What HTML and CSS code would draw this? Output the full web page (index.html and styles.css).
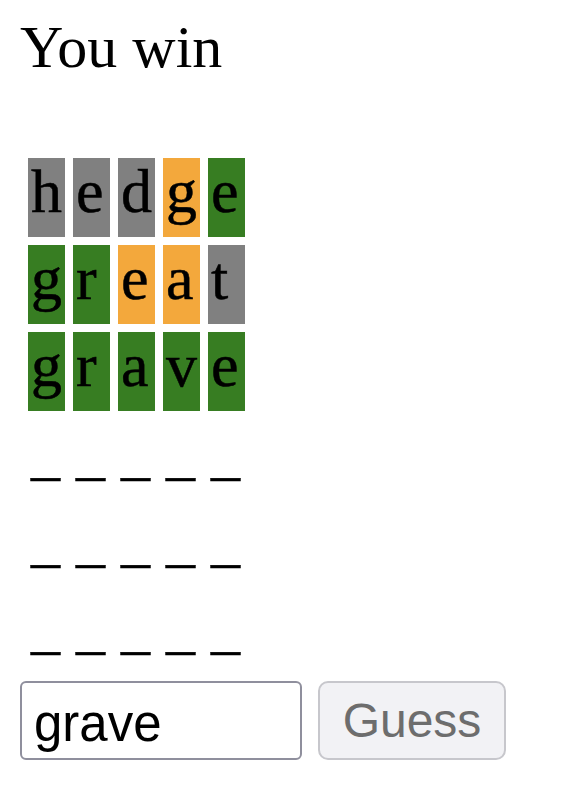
FILE: index.html
```html
<!DOCTYPE html>
<html lang="en">
<head>
<meta charset="utf-8">
<title>You win</title>
<link rel="stylesheet" href="styles.css">
</head>
<body>
<div class="page">
  <h1 class="status">You win</h1>
  <div class="board">
    <div class="row">
      <span class="tile absent">h</span><span class="tile absent">e</span><span class="tile absent">d</span><span class="tile present">g</span><span class="tile correct">e</span>
    </div>
    <div class="row">
      <span class="tile correct">g</span><span class="tile correct">r</span><span class="tile present">e</span><span class="tile present">a</span><span class="tile absent">t</span>
    </div>
    <div class="row">
      <span class="tile correct">g</span><span class="tile correct">r</span><span class="tile correct">a</span><span class="tile correct">v</span><span class="tile correct">e</span>
    </div>
    <div class="row">
      <span class="tile empty">_</span><span class="tile empty">_</span><span class="tile empty">_</span><span class="tile empty">_</span><span class="tile empty">_</span>
    </div>
    <div class="row">
      <span class="tile empty">_</span><span class="tile empty">_</span><span class="tile empty">_</span><span class="tile empty">_</span><span class="tile empty">_</span>
    </div>
    <div class="row">
      <span class="tile empty">_</span><span class="tile empty">_</span><span class="tile empty">_</span><span class="tile empty">_</span><span class="tile empty">_</span>
    </div>
  </div>
  <form class="guess-form">
    <input class="guess-input" type="text" value="grave">
    <button class="guess-button" type="button">Guess</button>
  </form>
</div>
</body>
</html>
```
FILE: styles.css
```css
html, body {
  margin: 0;
  padding: 0;
  background: #ffffff;
}

.page {
  padding: 0 20px;
  font-family: "Liberation Serif", "Times New Roman", serif;
  color: #000;
}

.status {
  margin: 14px 0 0;
  font-size: 60px;
  line-height: 66px;
  font-weight: normal;
}

.board {
  margin-top: 78px;
  padding-left: 8px;
  display: flex;
  flex-direction: column;
  gap: 8px;
}

.row {
  display: flex;
  gap: 8px;
}

.tile {
  box-sizing: border-box;
  width: 37px;
  height: 79px;
  padding-left: 3px;
  font-size: 62px;
  line-height: 66px;
  overflow: hidden;
  -webkit-text-stroke: 0.5px #000;
}

.tile.empty {
  font-size: 58px;
  line-height: 72px;
}

.absent { background: #808080; }
.present { background: #f3a83c; }
.correct { background: #377d22; }

.guess-form {
  margin: 9px 0 0;
  display: flex;
  gap: 16px;
}

.guess-input {
  box-sizing: border-box;
  width: 282px;
  height: 79px;
  margin: 0;
  padding: 5px 12px 0;
  border: 2px solid #8f8f9d;
  border-radius: 6px;
  font-family: "Liberation Sans", Arial, sans-serif;
  font-size: 51px;
  color: #000;
  background: #fff;
  outline: none;
}

.guess-button {
  box-sizing: border-box;
  width: 188px;
  height: 79px;
  margin: 0;
  padding: 0;
  border: 2px solid #c7c7cc;
  border-radius: 10px;
  background: #f2f2f5;
  color: #6d6d6d;
  font-family: "Liberation Sans", Arial, sans-serif;
  font-size: 48px;
}
```
